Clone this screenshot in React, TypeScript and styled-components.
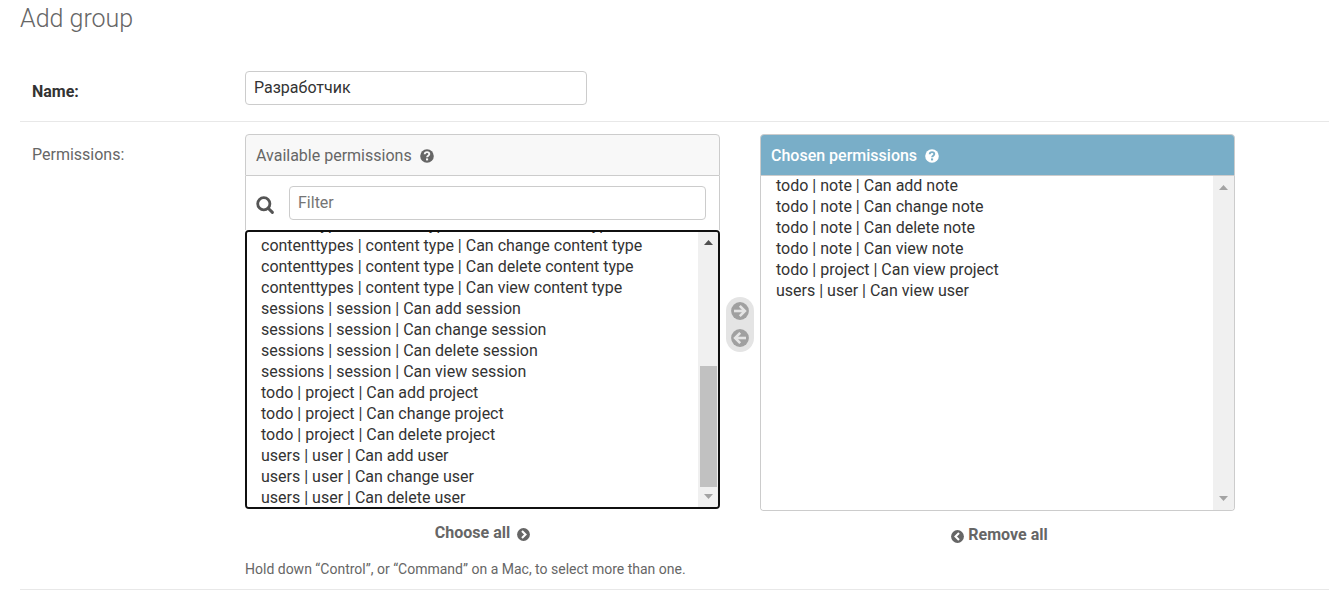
import React, { useEffect, useRef } from 'react';
import styled, { createGlobalStyle } from 'styled-components';

const GlobalStyle = createGlobalStyle`
  *, *::before, *::after { box-sizing: border-box; }
  body {
    margin: 0;
    background: #fff;
    color: #333;
    font-family: Roboto, "Liberation Sans", sans-serif;
    font-size: 16px;
    line-height: 20px;
  }
`;

const Page = styled.main`
  padding: 4px 0 16px 20px;
`;

const Title = styled.h1`
  margin: 0 0 36px;
  font-size: 25px;
  line-height: 30px;
  font-weight: 300;
  color: #666;
`;

const FormRow = styled.div<{ $top?: number; $bottom?: number }>`
  display: flex;
  align-items: flex-start;
  padding: ${p => p.$top ?? 0}px 0 ${p => p.$bottom ?? 0}px 12px;
  border-bottom: 1px solid #e8e8e8;
`;

const Label = styled.label<{ $required?: boolean }>`
  flex: 0 0 213px;
  padding-top: 11px;
  font-weight: ${p => (p.$required ? 700 : 400)};
  color: ${p => (p.$required ? '#333' : '#666')};
`;

const TextInput = styled.input`
  height: 34px;
  min-width: 0;
  padding: 4px 8px 5px;
  border: 1px solid #ccc;
  border-radius: 4px;
  background: #fff;
  color: #333;
  font: inherit;
  &::placeholder { color: #757575; opacity: 1; }
`;

const NameInput = styled(TextInput)`
  width: 342px;
`;

const FilterInput = styled(TextInput)`
  flex: 1;
`;

const Field = styled.div`
  flex: 1;
  min-width: 0;
`;

const Selector = styled.div`
  display: flex;
  align-items: flex-start;
`;

const Column = styled.section`
  flex: 0 1 475px;
  min-width: 0;
  display: flex;
  flex-direction: column;
`;

const Heading = styled.h2<{ $chosen?: boolean }>`
  display: flex;
  align-items: center;
  gap: 8px;
  height: 42px;
  margin: 0;
  padding: 2px 10px 0;
  border: 1px solid #ccc;
  border-radius: 4px 4px 0 0;
  background: ${p => (p.$chosen ? '#79aec8' : '#f8f8f8')};
  color: ${p => (p.$chosen ? '#fff' : '#666')};
  font-size: 16px;
  line-height: 20px;
  font-weight: ${p => (p.$chosen ? 500 : 400)};
`;

const FilterBar = styled.div`
  display: flex;
  align-items: center;
  gap: 14px;
  height: 54px;
  padding: 0 13px 0 10px;
  border: solid #ccc;
  border-width: 0 1px;
`;

const FilterLabel = styled.label`
  display: flex;
  padding-top: 4px;
`;

const ListFrame = styled.div<{ $active?: boolean }>`
  display: flex;
  height: ${p => (p.$active ? 279 : 335)}px;
  border: ${p => (p.$active ? '2px solid #101010' : '1px solid #ccc')};
  border-top-width: ${p => (p.$active ? 2 : 0)}px;
  border-radius: ${p => (p.$active ? '4px' : '0 0 4px 4px')};
  overflow: hidden;
`;

const OptionList = styled.select<{ $indent: number }>`
  flex: 1;
  min-width: 0;
  height: 100%;
  margin: 0;
  padding: 0 ${p => p.$indent}px;
  border: 0;
  border-radius: 0;
  outline: 0;
  background: #fff;
  color: #333;
  font: 16px Roboto, "Liberation Sans", sans-serif;
  scrollbar-width: none;
  &::-webkit-scrollbar { display: none; }
  option { padding: 0 5px 2px; }
`;

const ScrollTrack = styled.div<{ $wide?: boolean }>`
  flex: 0 0 ${p => (p.$wide ? 21 : 20)}px;
  display: flex;
  flex-direction: column;
  justify-content: space-between;
  align-items: center;
  padding: ${p => (p.$wide ? 1 : 0)}px 0;
  background: #f0f0f0;
`;

const ScrollThumb = styled.div`
  width: 17px;
  height: 121px;
  margin: auto 0 0;
  background: #c1c1c1;
`;

const Chooser = styled.div`
  flex: 0 0 28px;
  display: flex;
  flex-direction: column;
  justify-content: space-between;
  align-items: center;
  height: 55px;
  margin: 163px 6px 0;
  padding: 5px 0;
  border-radius: 14px;
  background: #e4e4e4;
`;

const IconButton = styled.button`
  display: flex;
  padding: 0;
  border: 0;
  background: none;
`;

const AllLink = styled.a<{ $remove?: boolean }>`
  display: flex;
  align-self: center;
  align-items: center;
  gap: ${p => (p.$remove ? 4 : 7)}px;
  margin-top: 14px;
  padding-left: ${p => (p.$remove ? 4 : 0)}px;
  color: #666;
  font-weight: 700;
  text-decoration: none;
  svg { margin-top: 3px; }
`;

const Help = styled.p`
  margin: 15px 0 0;
  font-size: 14px;
  line-height: 18px;
  color: #666;
`;

const HelpIcon = ({ fill, mark }: { fill: string; mark: string }) => (
  <svg width="14" height="14" viewBox="0 0 14 14" aria-hidden="true">
    <circle cx="7" cy="7" r="6.8" fill={fill} />
    <path d="M4.7 5.3C4.8 2.3 9.3 2.5 9.3 5.1C9.3 6.8 7.1 6.7 7.1 8.3" fill="none" stroke={mark} strokeWidth="1.9" />
    <rect x="6" y="9.4" width="2.1" height="2" fill={mark} />
  </svg>
);

const SearchIcon = () => (
  <svg width="19" height="19" viewBox="0 0 19 19" role="img" aria-label="Filter permissions">
    <circle cx="7.8" cy="7.8" r="6.1" fill="none" stroke="#555" strokeWidth="2.8" />
    <path d="M12.2 12.2L16.4 16.4" stroke="#555" strokeWidth="3" strokeLinecap="round" />
  </svg>
);

const ArrowIcon = ({ left }: { left?: boolean }) => (
  <svg width="18" height="18" viewBox="0 0 18 18" aria-hidden="true">
    <circle cx="9" cy="9" r="8.9" fill="#a0a0a0" />
    <g transform={left ? 'matrix(-1 0 0 1 18 0)' : undefined} fill="none" stroke="#e4e4e4" strokeWidth="2.6">
      <path d="M3 9H13.6" />
      <path d="M8.8 3.9L13.9 9L8.8 14.1" />
    </g>
  </svg>
);

const ChevronIcon = ({ left }: { left?: boolean }) => (
  <svg width="13" height="13" viewBox="0 0 13 13" aria-hidden="true">
    <circle cx="6.5" cy="6.5" r="6.4" fill="#666" />
    <path d={left ? 'M8 3L4.5 6.5L8 10' : 'M5 3L8.5 6.5L5 10'} fill="none" stroke="#fff" strokeWidth="2.1" />
  </svg>
);

const ScrollArrow = ({ down, dark }: { down?: boolean; dark?: boolean }) => (
  <svg width="17" height="20" viewBox="0 0 17 20" aria-hidden="true">
    <path d={down ? 'M4 7H13L8.5 12Z' : 'M4 13H13L8.5 8Z'} fill={dark ? '#505050' : '#a3a3a3'} />
  </svg>
);

const crud = (model: string, name: string, verbs = ['add', 'change', 'delete', 'view']) =>
  verbs.map(verb => `${model} | Can ${verb} ${name}`);

const available = [
  ...crud('admin | log entry', 'log entry'),
  ...crud('auth | group', 'group'),
  ...crud('auth | permission', 'permission'),
  ...crud('contenttypes | content type', 'content type'),
  ...crud('sessions | session', 'session'),
  ...crud('todo | project', 'project', ['add', 'change', 'delete']),
  ...crud('users | user', 'user', ['add', 'change', 'delete']),
];

const chosen = [
  ...crud('todo | note', 'note'),
  ...crud('todo | project', 'project', ['view']),
  ...crud('users | user', 'user', ['view']),
];

export default function App() {
  const listRef = useRef<HTMLSelectElement>(null);

  useEffect(() => {
    const list = listRef.current;
    if (list) list.scrollTop = list.scrollHeight - list.clientHeight - 2;
  }, []);

  return (
    <>
      <GlobalStyle />
      <Page>
        <Title>Add group</Title>
        <form>
          <FormRow $top={1} $bottom={16}>
            <Label htmlFor="name" $required>Name:</Label>
            <NameInput id="name" type="text" defaultValue="Разработчик" />
          </FormRow>
          <FormRow $top={12} $bottom={11}>
            <Label htmlFor="available">Permissions:</Label>
            <Field>
              <Selector>
                <Column>
                  <Heading>
                    Available permissions
                    <HelpIcon fill="#666" mark="#f8f8f8" />
                  </Heading>
                  <FilterBar>
                    <FilterLabel htmlFor="filter"><SearchIcon /></FilterLabel>
                    <FilterInput id="filter" type="text" placeholder="Filter" />
                  </FilterBar>
                  <ListFrame $active>
                    <OptionList id="available" ref={listRef} multiple $indent={9}>
                      {available.map(item => <option key={item}>{item}</option>)}
                    </OptionList>
                    <ScrollTrack>
                      <ScrollArrow dark />
                      <ScrollThumb />
                      <ScrollArrow down />
                    </ScrollTrack>
                  </ListFrame>
                  <AllLink href="#choose-all">
                    Choose all
                    <ChevronIcon />
                  </AllLink>
                </Column>
                <Chooser>
                  <IconButton type="button" aria-label="Choose"><ArrowIcon /></IconButton>
                  <IconButton type="button" aria-label="Remove"><ArrowIcon left /></IconButton>
                </Chooser>
                <Column>
                  <Heading $chosen>
                    Chosen permissions
                    <HelpIcon fill="#fff" mark="#79aec8" />
                  </Heading>
                  <ListFrame>
                    <OptionList aria-label="Chosen permissions" multiple $indent={10}>
                      {chosen.map(item => <option key={item}>{item}</option>)}
                    </OptionList>
                    <ScrollTrack $wide>
                      <ScrollArrow />
                      <ScrollArrow down />
                    </ScrollTrack>
                  </ListFrame>
                  <AllLink href="#remove-all" $remove>
                    <ChevronIcon left />
                    Remove all
                  </AllLink>
                </Column>
              </Selector>
              <Help>Hold down “Control”, or “Command” on a Mac, to select more than one.</Help>
            </Field>
          </FormRow>
        </form>
      </Page>
    </>
  );
}
